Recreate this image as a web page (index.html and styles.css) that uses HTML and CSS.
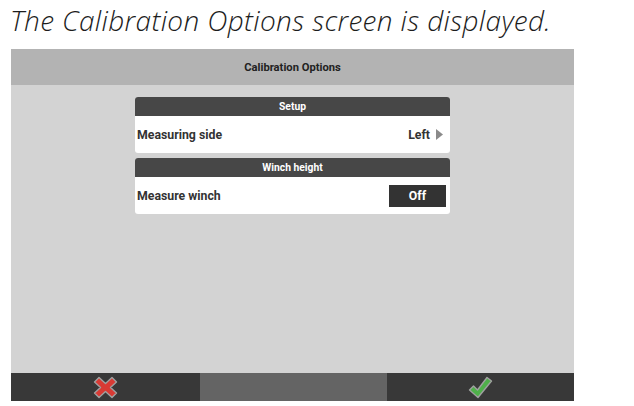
FILE: index.html
```html
<!DOCTYPE html>
<html>
<head>
<meta charset="utf-8">
<link rel="stylesheet" href="styles.css">
</head>
<body>
<p class="caption">The Calibration Options screen is displayed.</p>
<div class="screen">
  <div class="titlebar">Calibration Options</div>
  <div class="content">
    <div class="card">
      <div class="card-head">Setup</div>
      <div class="row">
        <span class="label">Measuring side</span>
        <span class="value">Left <svg class="arrow" width="7" height="11" viewBox="0 0 7 11"><path d="M0 0 L7 5.5 L0 11 Z" fill="#8a8a8a"/></svg></span>
      </div>
    </div>
    <div class="card">
      <div class="card-head">Winch height</div>
      <div class="row">
        <span class="label">Measure winch</span>
        <span class="toggle">Off</span>
      </div>
    </div>
  </div>
  <div class="bottombar">
    <div class="seg">
      <svg width="25" height="23" viewBox="0 0 25 23"><path d="M1.5 6 L6 1.5 L12.5 7.5 L19 1.5 L23.5 6 L17.5 11.5 L23.5 17 L19 21.5 L12.5 15.5 L6 21.5 L1.5 17 L7.5 11.5 Z" fill="#d83a34" stroke="#a0a0a0" stroke-width="1.4" stroke-linejoin="round"/></svg>
    </div>
    <div class="seg mid"></div>
    <div class="seg">
      <svg width="25" height="23" viewBox="0 0 25 23"><path d="M1.5 14 L5.5 10 L9.5 14 L19 1.5 L23.5 5 L10 21.5 Z" fill="#4fb04a" stroke="#a0a0a0" stroke-width="1.4" stroke-linejoin="round"/></svg>
    </div>
  </div>
</div>
</body>
</html>
```
FILE: styles.css
```css
html, body {
  margin: 0;
  padding: 0;
  background: #ffffff;
}
.caption {
  margin: 0;
  padding: 2px 0 0 10px;
  height: 42px;
  box-sizing: border-box;
  font-family: "Open Sans", sans-serif;
  font-style: italic;
  font-weight: 300;
  font-size: 28px;
  letter-spacing: 0.35px;
  line-height: 36px;
  color: #1c1c1c;
  white-space: nowrap;
}
.screen {
  margin-left: 11px;
  margin-top: 7px;
  width: 563px;
  font-family: Roboto, "Liberation Sans", sans-serif;
}
.titlebar {
  height: 36px;
  background: #b3b3b3;
  display: flex;
  align-items: center;
  justify-content: center;
  font-weight: 700;
  font-size: 11.2px;
  color: #222222;
}
.content {
  height: 288px;
  background: #d3d3d3;
  display: flex;
  flex-direction: column;
  align-items: center;
  padding-top: 12px;
  gap: 5px;
  box-sizing: border-box;
}
.card {
  width: 315px;
  background: #ffffff;
  border-radius: 3px;
  overflow: hidden;
}
.card-head {
  height: 19px;
  background: #474747;
  color: #ffffff;
  font-weight: 700;
  font-size: 10.3px;
  display: flex;
  align-items: center;
  justify-content: center;
}
.row {
  height: 37px;
  display: flex;
  align-items: center;
  justify-content: space-between;
  padding: 0 4px 0 2px;
}
.label {
  font-weight: 700;
  font-size: 12.3px;
  color: #333333;
}
.value {
  font-weight: 700;
  font-size: 12.3px;
  color: #333333;
  display: flex;
  align-items: center;
  gap: 6px;
  padding-right: 3px;
}
.toggle {
  width: 57px;
  height: 22px;
  background: #333333;
  color: #ffffff;
  font-weight: 700;
  font-size: 12.3px;
  display: flex;
  align-items: center;
  justify-content: center;
}
.bottombar {
  height: 28px;
  display: grid;
  grid-template-columns: 189px 187px 187px;
  background: #383838;
}
.seg {
  display: flex;
  align-items: center;
  justify-content: center;
}
.seg.mid {
  background: #646464;
}
```
